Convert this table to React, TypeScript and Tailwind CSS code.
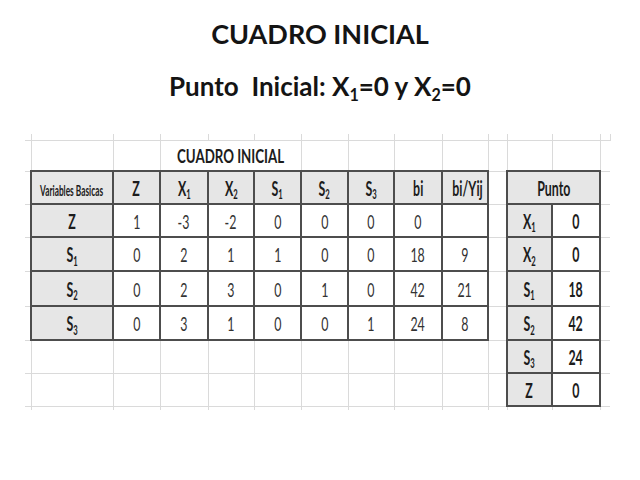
import React from 'react';

type Cell = {
  text?: React.ReactNode;
  span?: number;
  kind?: 'faint' | 'head' | 'data' | 'punto';
  raw?: boolean;
};

const widths = [6, 82, 47, 48, 46, 47, 47, 46, 48, 46, 19, 45, 48, 10];
const heights = [31, 33, 33, 34, 35, 34, 33, 33];

function Sym({ l, n }: { l: string; n?: string }) {
  return (
    <span>
      {l}
      {n && <sub className="text-[0.62em] bottom-[-0.3em]">{n}</sub>}
    </span>
  );
}

const dash = (k: Cell['kind'] = 'faint'): Cell => ({ kind: k });

const mainHeader: Cell[] = [
  {
    text: (
      <span className="inline-block whitespace-nowrap text-[16px] scale-x-[0.52] -mx-10">
        Variables Basicas
      </span>
    ),
    kind: 'head',
    raw: true,
  },
  { text: 'Z', kind: 'head' },
  { text: <Sym l="X" n="1" />, kind: 'head' },
  { text: <Sym l="X" n="2" />, kind: 'head' },
  { text: <Sym l="S" n="1" />, kind: 'head' },
  { text: <Sym l="S" n="2" />, kind: 'head' },
  { text: <Sym l="S" n="3" />, kind: 'head' },
  { text: 'bi', kind: 'head' },
  { text: 'bi/Yij', kind: 'head' },
];

const body: [React.ReactNode, string[]][] = [
  ['Z', ['1', '-3', '-2', '0', '0', '0', '0', '']],
  [<Sym l="S" n="1" />, ['0', '2', '1', '1', '0', '0', '18', '9']],
  [<Sym l="S" n="2" />, ['0', '2', '3', '0', '1', '0', '42', '21']],
  [<Sym l="S" n="3" />, ['0', '3', '1', '0', '0', '1', '24', '8']],
];

const punto: [React.ReactNode, string][] = [
  [<Sym l="X" n="1" />, '0'],
  [<Sym l="X" n="2" />, '0'],
  [<Sym l="S" n="1" />, '18'],
  [<Sym l="S" n="2" />, '42'],
  [<Sym l="S" n="3" />, '24'],
  ['Z', '0'],
];

function buildRows(): Cell[][] {
  const rows: Cell[][] = [];
  // row 0: title of the sheet table
  rows.push([
    dash(),
    dash(),
    dash(),
    {
      text: (
        <span className="inline-block whitespace-nowrap text-[19px] font-bold text-[#1c1c1c] scale-x-[0.7] -mx-10">
          CUADRO INICIAL
        </span>
      ),
      span: 3,
      raw: true,
    },
    dash(),
    dash(),
    dash(),
    dash(),
    dash(),
    dash(),
    dash(),
    dash(),
  ]);
  // row 1: headers
  rows.push([dash(), ...mainHeader, dash(), { text: 'Punto', span: 2, kind: 'head' }, dash()]);
  for (let i = 0; i < 6; i++) {
    const r: Cell[] = [dash()];
    if (i < 4) {
      r.push({ text: body[i][0], kind: 'head' });
      body[i][1].forEach((v) => r.push({ text: v, kind: 'data' }));
    } else {
      for (let j = 0; j < 9; j++) r.push(dash());
    }
    r.push(dash());
    r.push({ text: punto[i][0], kind: 'head' });
    r.push({ text: punto[i][1], kind: 'punto' });
    r.push(dash());
    rows.push(r);
  }
  return rows;
}

function cellClass(kind: Cell['kind']) {
  switch (kind) {
    case 'head':
      return 'border-2 border-[#4d4d4d] bg-[#e6e6e6] font-bold text-[#1c1c1c]';
    case 'data':
      return 'border-2 border-[#4d4d4d] bg-white text-[#333333]';
    case 'punto':
      return 'border-2 border-[#4d4d4d] bg-white font-bold text-[#1c1c1c]';
    default:
      return 'border border-[#dadada]';
  }
}

export default function App() {
  const rows = buildRows();
  return (
    <div className="w-[640px] h-[480px] bg-white overflow-hidden font-['Lato','Liberation_Sans',sans-serif]">
      <div className="pt-[20px] flex flex-col items-center text-[#141414]">
        <h1 className="text-[27px] leading-none font-bold">CUADRO INICIAL</h1>
        <p className="mt-[26px] text-[26px] leading-none font-bold">
          Punto&nbsp; Inicial: <Sym l="X" n="1" />=0 y <Sym l="X" n="2" />=0
        </p>
      </div>

      <table className="mt-[35px] ml-[25px] w-[585px] table-fixed border-collapse">
        <colgroup>
          {widths.map((w, i) => (
            <col key={i} style={{ width: w }} />
          ))}
        </colgroup>
        <tbody>
          <tr className="h-[6px]">
            {widths.map((_, i) => (
              <td key={i} className={i === 0 ? '' : 'border-x border-[#dadada]'} />
            ))}
          </tr>
          {rows.map((r, ri) => (
            <tr key={ri} style={{ height: heights[ri] }}>
              {r.map((c, ci) => (
                <td
                  key={ci}
                  colSpan={c.span}
                  className={`${cellClass(c.kind)} ${ci === 0 ? 'border-l-0' : ''} ${
                    ci === r.length - 1 ? 'border-r-0' : ''
                  } p-0 text-center align-middle text-[20px] leading-none whitespace-nowrap`}
                >
                  {c.text !== undefined &&
                    (c.raw ? (
                      c.text
                    ) : (
                      <span className="inline-block scale-x-[0.62]">{c.text}</span>
                    ))}
                </td>
              ))}
            </tr>
          ))}
          <tr className="h-[4px]">
            {widths.map((_, i) => (
              <td
                key={i}
                className={i === 0 || i === widths.length - 1 ? '' : 'border-x border-[#dadada]'}
              />
            ))}
          </tr>
        </tbody>
      </table>
    </div>
  );
}
